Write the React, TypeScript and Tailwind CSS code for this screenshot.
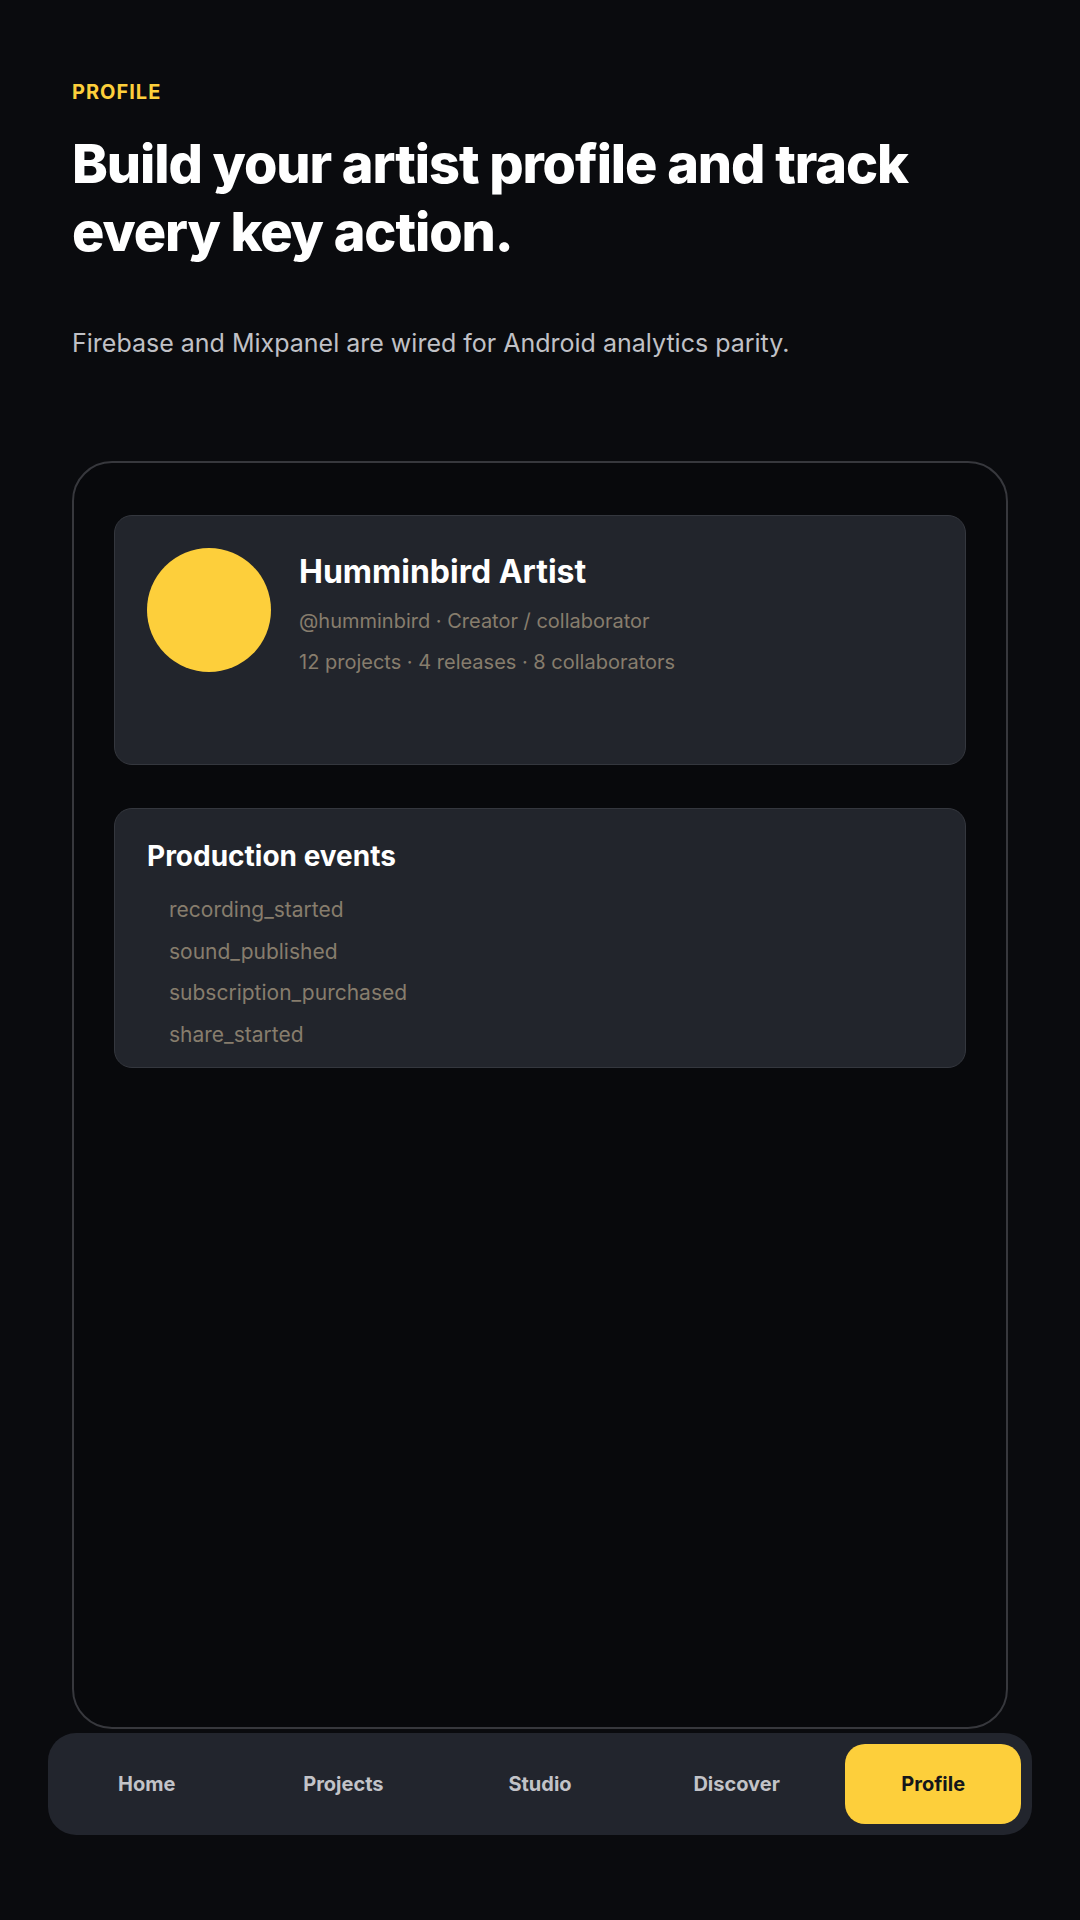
import React from "react";

const events = ["recording_started", "sound_published", "subscription_purchased", "share_started"];
const tabs = ["Home", "Projects", "Studio", "Discover", "Profile"];

export default function App() {
  return (
    <div className="min-h-[1920px] w-[1080px] bg-[#0a0b0e] font-['Inter',sans-serif] text-white">
      <div className="px-[72px] pt-[78px]">
        <div className="text-[20px] font-bold leading-[28px] tracking-wider text-[#fdcf3b]">PROFILE</div>
        <h1 className="mt-[24px] text-[54px] font-extrabold leading-[67.5px] tracking-[-0.02em] text-white">
          Build your artist profile and track
          <br />
          every key action.
        </h1>
        <p className="mt-[60px] text-[25px] leading-[36px] text-[#c0c1c6]">
          Firebase and Mixpanel are wired for Android analytics parity.
        </p>
        <div className="mt-[100px] flex h-[1268px] flex-col gap-[43px] rounded-[40px] border-2 border-[#37383d] bg-[#08090c] px-[40px] pt-[52px]">
          <div className="flex h-[250px] gap-[28px] rounded-[18px] border border-[#34373e] bg-[#22252c] p-[32px]">
            <div className="h-[124px] w-[124px] shrink-0 rounded-full bg-[#fdcf3b]" />
            <div className="flex flex-col">
              <div className="text-[32px] font-bold leading-[48px] text-white">Humminbird Artist</div>
              <div className="mt-[10px] text-[20px] leading-[30px] text-[#877d6d]">@humminbird · Creator / collaborator</div>
              <div className="mt-[11px] text-[20px] leading-[30px] text-[#877d6d]">12 projects · 4 releases · 8 collaborators</div>
            </div>
          </div>
          <div className="rounded-[18px] border border-[#34373e] bg-[#22252c] px-[32px] pb-[17px] pt-[32px]">
            <div className="text-[28px] font-bold leading-[30px] text-white">Production events</div>
            <ul className="mt-[24px] flex flex-col gap-[11.67px] pl-[22px]">
              {events.map((e) => (
                <li key={e} className="text-[21px] leading-[30px] text-[#877d6d]">
                  {e}
                </li>
              ))}
            </ul>
          </div>
        </div>
      </div>
      <div className="mt-[4px] px-[48px]">
        <nav className="grid grid-cols-5 gap-[21px] rounded-[28px] bg-[#22252d] p-[11px]">
          {tabs.map((t) => (
            <div
              key={t}
              className={
                t === "Profile"
                  ? "flex h-[80px] items-center justify-center rounded-[20px] bg-[#fdcf3b] text-[20px] font-bold text-[#15161a]"
                  : "flex h-[80px] items-center justify-center rounded-[20px] text-[20px] font-bold text-[#c2c3c8]"
              }
            >
              {t}
            </div>
          ))}
        </nav>
      </div>
    </div>
  );
}
